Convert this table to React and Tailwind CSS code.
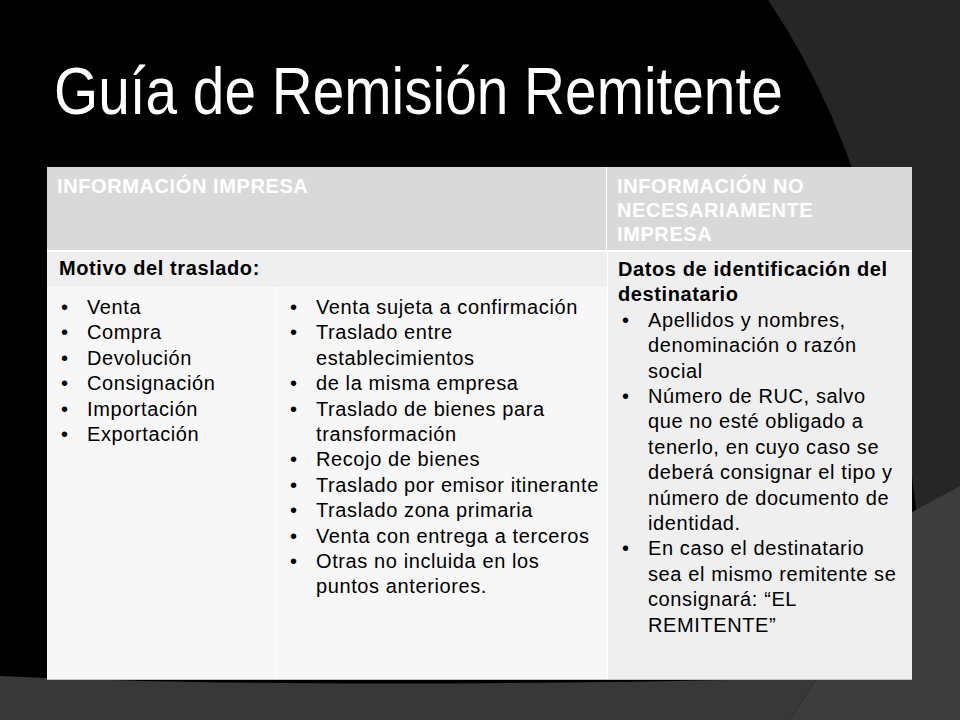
const col1 = ["Venta", "Compra", "Devolución", "Consignación", "Importación", "Exportación"];

const col2 = [
    "Venta sujeta a confirmación",
    "Traslado entre establecimientos",
    "de la misma empresa",
    "Traslado de bienes para transformación",
    "Recojo de bienes",
    "Traslado por emisor itinerante",
    "Traslado zona primaria",
    "Venta con entrega a terceros",
    "Otras no incluida en los puntos anteriores.",
];

const col3 = [
    "Apellidos y nombres, denominación o razón social",
    "Número de RUC, salvo que no esté obligado a tenerlo, en cuyo caso se deberá consignar el tipo y número de documento de identidad.",
    "En caso el destinatario sea el mismo remitente se consignará: “EL REMITENTE”",
];

const Bullets = ({ items }) => (
    <ul>
        {items.map((item) => (
            <li key={item} className="flex">
                <span className="w-[30px] shrink-0 pl-[4px]">•</span>
                <span>{item}</span>
            </li>
        ))}
    </ul>
);

const Background = () => (
    <svg
        className="absolute inset-0"
        width="960"
        height="720"
        viewBox="0 0 960 720"
    >
        <rect width="960" height="720" fill="#000" />
        {/* curved wedge on the right */}
        <path d="M768 0 Q 850 120 890 300 L 920 540 L 960 540 L 960 0 Z" fill="#262626" />
        {/* lighter facet bottom right */}
        <path d="M912 512 L 960 486 L 960 720 L 790 720 L 817 678 L 912 678 Z" fill="#3d3d3d" />
        {/* bottom band */}
        <path d="M0 676 Q 300 690 817 678 L 790 720 L 0 720 Z" fill="#383838" />
    </svg>
);

export default function App() {
    return (
        <div className="relative w-[960px] h-[720px] overflow-hidden bg-black font-['Liberation_Sans',Arial,sans-serif]">
            <Background />

            <div className="relative">
                {/* Titulo */}
                <h1 className="ml-[54px] pt-[60px] h-[123px] text-white text-[66px] leading-[63px] origin-left scale-x-[0.86] whitespace-nowrap">
                    Guía de Remisión Remitente
                </h1>

                {/* Tabla */}
                <div className="ml-[47px] mt-[44px] w-[865px] h-[513px] grid grid-cols-[229px_331px_1fr] grid-rows-[85px_35px_1fr] border-b border-[#c4c4c4] text-[20px] tracking-[0.6px] text-black">
                    <div className="col-span-2 bg-[#d9d9d9] border-r border-b-2 border-white px-[10px] pt-[7px] font-bold text-white leading-[24px]">
                        INFORMACIÓN IMPRESA
                    </div>
                    <div className="bg-[#d9d9d9] border-b-2 border-white pl-[10px] pr-[8px] pt-[7px] font-bold text-white leading-[24px]">
                        INFORMACIÓN NO NECESARIAMENTE IMPRESA
                    </div>

                    <div className="col-span-2 bg-[#efefef] px-[12px] pt-[4px] font-bold leading-[25.4px]">
                        Motivo del traslado:
                    </div>
                    <div className="row-span-2 bg-[#efefef] border-l border-white pl-[10px] pr-[12px] pt-[5px] leading-[25.4px]">
                        <p className="font-bold">
                            Datos de identificación del destinatario
                        </p>
                        <Bullets items={col3} />
                    </div>

                    <div className="bg-[#f7f7f7] border-r border-white pl-[10px] pt-[8px] leading-[25.4px]">
                        <Bullets items={col1} />
                    </div>
                    <div className="bg-[#f7f7f7] pl-[10px] pr-[6px] pt-[8px] leading-[25.4px]">
                        <Bullets items={col2} />
                    </div>
                </div>
            </div>
        </div>
    );
}
